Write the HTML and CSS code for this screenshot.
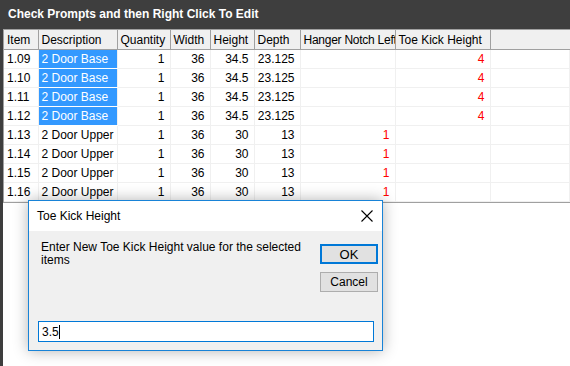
FILE: index.html
```html
<!DOCTYPE html>
<html lang="en">
<head>
  <meta charset="UTF-8">
  <title>Check Prompts</title>
  <link rel="stylesheet" href="styles.css">
</head>
<body>
  <div class="window">
    <div class="titlebar">Check Prompts and then Right Click To Edit</div>
    <div class="frame">
      <table class="grid">
        <colgroup>
          <col class="c-item"><col class="c-desc"><col class="c-qty"><col class="c-w">
          <col class="c-h"><col class="c-d"><col class="c-hang"><col class="c-toe"><col>
        </colgroup>
        <thead>
          <tr>
            <th>Item</th><th>Description</th><th>Quantity</th><th>Width</th>
            <th>Height</th><th>Depth</th><th class="tight">Hanger Notch Left</th><th>Toe Kick Height</th><th></th>
          </tr>
        </thead>
        <tbody>
          <tr><td>1.09</td><td class="sel">2 Door Base</td><td class="num">1</td><td class="num">36</td><td class="num">34.5</td><td class="num">23.125</td><td></td><td class="num red">4</td><td></td></tr>
          <tr><td>1.10</td><td class="sel">2 Door Base</td><td class="num">1</td><td class="num">36</td><td class="num">34.5</td><td class="num">23.125</td><td></td><td class="num red">4</td><td></td></tr>
          <tr><td>1.11</td><td class="sel">2 Door Base</td><td class="num">1</td><td class="num">36</td><td class="num">34.5</td><td class="num">23.125</td><td></td><td class="num red">4</td><td></td></tr>
          <tr><td>1.12</td><td class="sel">2 Door Base</td><td class="num">1</td><td class="num">36</td><td class="num">34.5</td><td class="num">23.125</td><td></td><td class="num red">4</td><td></td></tr>
          <tr><td>1.13</td><td>2 Door Upper</td><td class="num">1</td><td class="num">36</td><td class="num">30</td><td class="num">13</td><td class="num red">1</td><td></td><td></td></tr>
          <tr><td>1.14</td><td>2 Door Upper</td><td class="num">1</td><td class="num">36</td><td class="num">30</td><td class="num">13</td><td class="num red">1</td><td></td><td></td></tr>
          <tr><td>1.15</td><td>2 Door Upper</td><td class="num">1</td><td class="num">36</td><td class="num">30</td><td class="num">13</td><td class="num red">1</td><td></td><td></td></tr>
          <tr><td>1.16</td><td>2 Door Upper</td><td class="num">1</td><td class="num">36</td><td class="num">30</td><td class="num">13</td><td class="num red">1</td><td></td><td></td></tr>
        </tbody>
      </table>
      <div class="bottom-line"></div>
    </div>

    <div class="dialog">
      <div class="dlg-title">
        <span>Toe Kick Height</span>
        <svg class="close" width="12" height="12" viewBox="0 0 12 12">
          <path d="M0.5 0.5 L11.5 11.5 M11.5 0.5 L0.5 11.5" stroke="#000" stroke-width="1.1" fill="none"/>
        </svg>
      </div>
      <div class="dlg-body">
        <div class="dlg-top">
          <p class="msg">Enter New Toe Kick Height value for the selected items</p>
          <div class="buttons">
            <button class="btn ok">OK</button>
            <button class="btn">Cancel</button>
          </div>
        </div>
        <div class="field">3.5<span class="caret"></span></div>
      </div>
    </div>
  </div>
</body>
</html>
```

FILE: styles.css
```css
html, body {
  margin: 0;
  height: 100%;
  background: #fff;
  font-family: "Liberation Sans", Arial, sans-serif;
  font-size: 12px;
  color: #000;
  overflow: hidden;
}
.window {
  position: relative;
  height: 366px;
  border-left: 3px solid #3e3e3e;
}
.titlebar {
  height: 29px;
  margin-left: -3px;
  padding-left: 8px;
  background: #3e3e3e;
  color: #fff;
  font-weight: bold;
  font-size: 12px;
  line-height: 29px;
}
.frame {
  border-left: 1px solid #a0a0a0;
  border-top: 1px solid #a0a0a0;
}
.grid {
  border-collapse: collapse;
  table-layout: fixed;
  width: 100%;
}
.c-item { width: 34px; }
.c-desc { width: 79px; }
.c-qty { width: 53px; }
.c-w { width: 40px; }
.c-h { width: 44px; }
.c-d { width: 46px; }
.c-hang { width: 95px; }
.c-toe { width: 95px; }
.grid th, .grid td {
  height: 18px;
  padding: 0 0 0 3px;
  line-height: 18px;
  white-space: nowrap;
  overflow: hidden;
  text-overflow: clip;
  text-align: left;
  font-weight: normal;
}
.grid th {
  height: 19px;
  background: #f0f0f0;
  border-right: 1px solid #a0a0a0;
  border-bottom: 1px solid #a0a0a0;
}
.grid th.tight {
  letter-spacing: -0.25px;
}
.grid th:last-child {
  border-right: none;
}
.grid td {
  border-right: 1px solid #f0f0f0;
  border-bottom: 1px solid #f0f0f0;
}
.grid td.num {
  text-align: right;
  padding-right: 5px;
}
.grid td.red {
  color: #ff0000;
}
.grid td.sel {
  background: #3399ff;
  color: #fff;
  border-bottom-color: #fff;
}
.bottom-line {
  height: 0;
  border-top: 1px solid #a0a0a0;
}

.dialog {
  position: absolute;
  left: 25px;
  top: 200px;
  width: 353px;
  height: 149px;
  border: 1px solid #1883d7;
  background: #f0f0f0;
  box-shadow: 0 0 14px rgba(0, 0, 0, 0.3);
  display: flex;
  flex-direction: column;
}
.dlg-title {
  height: 30px;
  background: #fff;
  display: flex;
  align-items: center;
  justify-content: space-between;
  padding: 0 9px 0 8px;
}
.dlg-title span {
  font-size: 12px;
}
.close {
  display: block;
}
.dlg-body {
  flex: 1;
  padding: 10px 4px 0 9px;
}
.dlg-top {
  display: flex;
  justify-content: space-between;
  height: 80px;
}
.msg {
  margin: 0;
  padding-left: 3px;
  width: 275px;
  line-height: 13px;
  font-size: 12px;
}
.buttons {
  display: flex;
  flex-direction: column;
  gap: 8px;
  padding-top: 3px;
}
.btn {
  width: 58px;
  height: 20px;
  padding: 0;
  background: #e1e1e1;
  border: 1px solid #adadad;
  font-family: "Liberation Sans", Arial, sans-serif;
  font-size: 12px;
  color: #000;
}
.btn.ok {
  border: 2px solid #0078d7;
  font-size: 13px;
}
.field {
  width: 331px;
  height: 19px;
  padding-left: 3px;
  background: #fff;
  border: 1px solid #0078d7;
  font-size: 12px;
  display: flex;
  align-items: center;
}
.caret {
  display: inline-block;
  width: 1px;
  height: 14px;
  background: #000;
}
```
